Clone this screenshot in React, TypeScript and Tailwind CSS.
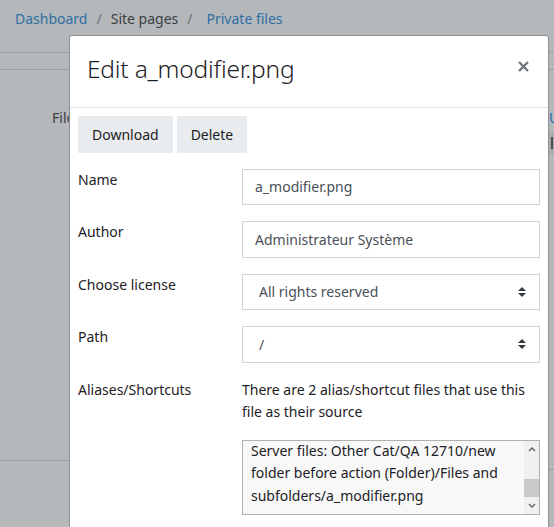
import React from "react";

const font = { fontFamily: '"Noto Sans", "Open Sans", sans-serif' };

function SelectArrows() {
  return (
    <svg width="8" height="10" viewBox="0 0 4 5" className="shrink-0">
      <path d="M2 0L0 2h4zm0 5L0 3h4z" fill="#343a40" />
    </svg>
  );
}

function Row({ label, children }: { label: string; children: React.ReactNode }) {
  return (
    <div className="flex mb-4">
      <div className="w-[164px] shrink-0 leading-[22.5px] text-[#1d2125]">{label}</div>
      <div className="flex-1 min-w-0">{children}</div>
    </div>
  );
}

export default function App() {
  return (
    <div
      className="relative w-[554px] h-[527px] overflow-hidden bg-[#b5b8bb] text-[14px]"
      style={font}
    >
      {/* background page */}
      <div className="flex items-center h-[36px] px-[15px] gap-[9px] text-[14px]">
        <span className="text-[#2d6ea3]">Dashboard</span>
        <span className="text-[#6b6e71]">/</span>
        <span className="text-[#3c3f42]">Site pages</span>
        <span className="text-[#6b6e71] mr-[5px]">/</span>
        <span className="text-[#2d6ea3]">Private files</span>
      </div>
      <div className="h-[17px] border-b border-[#9c9fa2]" />
      <div className="h-[17px] border-b border-[#9c9fa2]" />
      <div className="flex justify-between mt-[37px]">
        <span className="ml-[52px] text-[#3c3f42]">Files</span>
        <div className="w-[5px] overflow-hidden">
          <span className="text-[#2d6ea3]">U</span>
        </div>
      </div>
      <div className="flex justify-end mt-[4px]">
        <div className="w-[5px] h-[22px] bg-[#a9acaf] flex items-center">
          <span className="ml-[2px] w-[2px] h-[12px] bg-[#4a4d50]" />
        </div>
      </div>
      <div className="flex items-start">
        <div className="w-[80px] h-[307px] border-b border-[#9c9fa2]" />
        <div className="ml-auto w-[10px] h-[316px] border-b border-[#9c9fa2]" />
      </div>

      {/* modal */}
      <div className="absolute left-[69px] top-[35px] w-[480px] h-[520px] bg-white border border-[#8e9194] rounded-t-[3px]">
        <div className="flex items-start justify-between h-[72px] border-b border-[#dee2e6] pl-[17px] pr-[19px]">
          <h5 className="text-[24.5px] font-light leading-[30px] mt-[18px] text-[#1d2125] tracking-[-0.2px]">
            Edit a_modifier.png
          </h5>
          <svg width="11" height="11" viewBox="0 0 11 11" className="mt-[25px]">
            <path d="M1 1L10 10M10 1L1 10" stroke="#73777b" strokeWidth="2.4" />
          </svg>
        </div>
        <div className="p-2">
          <div className="flex gap-1 mb-4">
            <button className="h-[36.5px] px-[14px] bg-[#e9ecef] text-[#1d2125]">Download</button>
            <button className="h-[36.5px] px-[14px] bg-[#e9ecef] text-[#1d2125]">Delete</button>
          </div>
          <Row label="Name">
            <div className="h-[36.5px] border border-[#ced4da] px-3 flex items-center text-[#495057]">
              a_modifier.png
            </div>
          </Row>
          <Row label="Author">
            <div className="h-[36.5px] border border-[#ced4da] px-3 flex items-center text-[#495057]">
              Administrateur Système
            </div>
          </Row>
          <Row label="Choose license">
            <div className="h-[36.5px] border border-[#ced4da] pl-4 pr-[13px] flex items-center justify-between text-[#495057]">
              <span>All rights reserved</span>
              <SelectArrows />
            </div>
          </Row>
          <Row label="Path">
            <div className="h-[36.5px] border border-[#ced4da] pl-4 pr-[13px] flex items-center justify-between text-[#495057]">
              <span>/</span>
              <SelectArrows />
            </div>
          </Row>
          <Row label="Aliases/Shortcuts">
            <div className="leading-[22.5px] text-[#1d2125] mb-4">
              There are 2 alias/shortcut files that use this file as their source
            </div>
            <div className="h-[75px] border border-[#b0b0b0] bg-[#f8f8f8] flex">
              <div className="flex-1 pl-[8px] pr-[4px] overflow-hidden leading-[22.5px] text-[#1d2125] -mt-[1px]">
                Server files: Other Cat/QA 12710/new folder before action (Folder)/Files and subfolders/a_modifier.png
              </div>
              <div className="w-[15px] flex flex-col bg-[#f0f0f0]">
                <div className="h-[17px] flex items-center justify-center">
                  <svg width="8" height="5" viewBox="0 0 8 5">
                    <path d="M1 4L4 1L7 4" fill="none" stroke="#606060" strokeWidth="1.4" />
                  </svg>
                </div>
                <div className="flex-1 flex flex-col justify-end">
                  <div className="h-[18px] bg-[#c9c9c9]" />
                </div>
                <div className="h-[17px] flex items-center justify-center">
                  <svg width="8" height="5" viewBox="0 0 8 5">
                    <path d="M1 1L4 4L7 1" fill="none" stroke="#606060" strokeWidth="1.4" />
                  </svg>
                </div>
              </div>
            </div>
          </Row>
        </div>
      </div>
    </div>
  );
}
